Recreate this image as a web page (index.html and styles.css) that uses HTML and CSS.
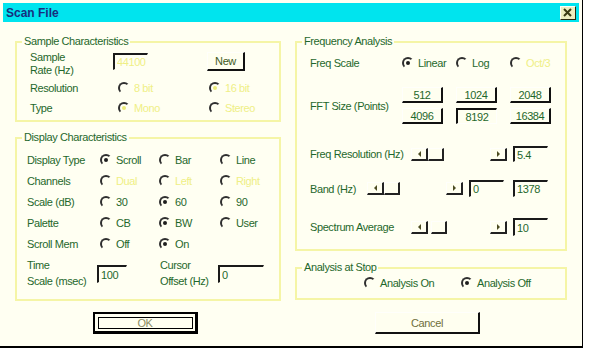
FILE: index.html
```html
<!DOCTYPE html>
<html lang="en">
<head>
    <meta charset="UTF-8">
    <title>Scan File</title>
    <link rel="stylesheet" href="styles.css">
</head>
<body>

    <div class="dialog">
        <!-- Barra del titolo -->
        <div class="titlebar">
            <span class="title">Scan File</span>
            <span class="close">
                <svg width="10" height="9" viewBox="0 0 10 9">
                    <path d="M1 1 L8 8 M8 1 L1 8" stroke="#3b3b12" stroke-width="2"/>
                </svg>
            </span>
        </div>

        <div class="body">
            <div class="col col-left">

                <!-- Sample Characteristics -->
                <fieldset class="group sample">
                    <legend>Sample Characteristics</legend>
                    <div class="sample-grid">
                        <div class="label two-line top">Sample<br>Rate (Hz)</div>
                        <div class="top"><input class="field rate disabled" type="text" value="44100" readonly></div>
                        <div class="top"><button class="btn new">New</button></div>

                        <div class="label">Resolution</div>
                        <div class="opt pad5 disabled"><span class="radio"></span>8 bit</div>
                        <div class="opt pad2 disabled"><span class="radio on pale"></span>16 bit</div>

                        <div class="label">Type</div>
                        <div class="opt pad5 disabled"><span class="radio on pale"></span>Mono</div>
                        <div class="opt pad2 disabled"><span class="radio"></span>Stereo</div>
                    </div>
                </fieldset>

                <!-- Display Characteristics -->
                <fieldset class="group display">
                    <legend>Display Characteristics</legend>
                    <div class="display-grid">
                        <div class="label">Display Type</div>
                        <div class="opt"><span class="radio on"></span>Scroll</div>
                        <div class="opt"><span class="radio"></span>Bar</div>
                        <div class="opt"><span class="radio"></span>Line</div>

                        <div class="label">Channels</div>
                        <div class="opt disabled"><span class="radio"></span>Dual</div>
                        <div class="opt disabled"><span class="radio"></span>Left</div>
                        <div class="opt disabled"><span class="radio"></span>Right</div>

                        <div class="label">Scale (dB)</div>
                        <div class="opt"><span class="radio"></span>30</div>
                        <div class="opt"><span class="radio on"></span>60</div>
                        <div class="opt"><span class="radio"></span>90</div>

                        <div class="label">Palette</div>
                        <div class="opt"><span class="radio"></span>CB</div>
                        <div class="opt"><span class="radio on"></span>BW</div>
                        <div class="opt"><span class="radio"></span>User</div>

                        <div class="label">Scroll Mem</div>
                        <div class="opt"><span class="radio"></span>Off</div>
                        <div class="opt"><span class="radio on"></span>On</div>
                        <div></div>
                    </div>

                    <div class="time-row">
                        <div class="label two-line time-label">Time<br>Scale (msec)</div>
                        <input class="field time" type="text" value="100" readonly>
                        <div class="label two-line cursor-label">Cursor<br>Offset (Hz)</div>
                        <input class="field offset" type="text" value="0" readonly>
                    </div>
                </fieldset>
            </div>

            <div class="col col-right">

                <!-- Frequency Analysis -->
                <fieldset class="group freq">
                    <legend>Frequency Analysis</legend>

                    <div class="scale-row">
                        <div class="label">Freq Scale</div>
                        <div class="opt"><span class="radio on"></span>Linear</div>
                        <div class="opt"><span class="radio"></span>Log</div>
                        <div class="opt disabled"><span class="radio"></span>Oct/3</div>
                    </div>

                    <div class="fft-row">
                        <div class="label fft-label">FFT Size (Points)</div>
                        <div class="fft-grid">
                            <button class="btn">512</button>
                            <button class="btn">1024</button>
                            <button class="btn">2048</button>
                            <button class="btn">4096</button>
                            <button class="btn pressed">8192</button>
                            <button class="btn">16384</button>
                        </div>
                    </div>

                    <div class="slider-row res">
                        <div class="label wide">Freq Resolution (Hz)</div>
                        <div class="scroll">
                            <span class="arrow left"></span>
                            <span class="thumb"></span>
                            <span class="track"></span>
                            <span class="arrow right"></span>
                        </div>
                        <input class="field num" type="text" value="5.4" readonly>
                    </div>

                    <div class="slider-row band">
                        <div class="label narrow">Band (Hz)</div>
                        <div class="scroll">
                            <span class="arrow left"></span>
                            <span class="thumb"></span>
                            <span class="track"></span>
                            <span class="arrow right"></span>
                        </div>
                        <input class="field num" type="text" value="0" readonly>
                        <input class="field num second" type="text" value="1378" readonly>
                    </div>

                    <div class="slider-row avg">
                        <div class="label wide">Spectrum Average</div>
                        <div class="scroll">
                            <span class="arrow left"></span>
                            <span class="thumb apart"></span>
                            <span class="track"></span>
                            <span class="arrow right"></span>
                        </div>
                        <input class="field num" type="text" value="10" readonly>
                    </div>
                </fieldset>

                <!-- Analysis at Stop -->
                <fieldset class="group stop">
                    <legend>Analysis at Stop</legend>
                    <div class="stop-row">
                        <div class="opt"><span class="radio"></span>Analysis On</div>
                        <div class="opt"><span class="radio on"></span>Analysis Off</div>
                    </div>
                </fieldset>
            </div>
        </div>

        <!-- Bottoni finali -->
        <div class="actions">
            <button class="btn big ok">OK</button>
            <button class="btn big cancel">Cancel</button>
        </div>
    </div>

</body>
</html>
```

FILE: styles.css
```css
/* Stile di base della finestra */
body {
    margin: 0;
    background-color: #ffffff;
    font-family: "Liberation Sans", Arial, sans-serif;
    font-size: 11px;
    letter-spacing: -0.4px;
    color: #1f682c;
}

.dialog {
    width: 582px;
    height: 343px;
    padding-top: 3px;
    background-color: #fffff2;
    border-right: 1px solid #000;
    border-bottom: 2px solid #000;
}

/* Barra del titolo */
.titlebar {
    width: 576px;
    height: 19px;
    margin: 0 3px;
    padding: 0 3px;
    box-sizing: border-box;
    background-color: #00e4ee;
    display: flex;
    align-items: center;
    justify-content: space-between;
}
.title {
    font-size: 12px;
    font-weight: bold;
    letter-spacing: 0;
    color: #172f7d;
}
.close {
    width: 16px;
    height: 14px;
    box-sizing: border-box;
    background-color: #eeeebf;
    border: 1px solid;
    border-color: #fffff8 #2b2b10 #2b2b10 #fffff8;
    display: flex;
    align-items: center;
    justify-content: center;
}

/* Colonne */
.body {
    display: flex;
    gap: 14px;
    padding: 13px 0 0 15px;
}
.col {
    display: flex;
    flex-direction: column;
}
.col-left {
    width: 266px;
    gap: 9px;
}
.col-right {
    width: 272px;
    gap: 10px;
}

/* Gruppi */
.group {
    margin: 0;
    padding: 0;
    min-width: 0;
    box-sizing: border-box;
    border: 2px solid #f5f5a6;
}
.group legend {
    margin-left: 5px;
    padding: 0 2px;
    line-height: 13px;
}
.sample { height: 87px; }
.display { height: 170px; }
.freq { height: 216px; }
.stop { height: 39px; }

.label {
    white-space: nowrap;
}
.two-line {
    line-height: 13px;
}
.disabled {
    color: #efef86;
}

/* Radio */
.opt {
    display: flex;
    align-items: center;
    gap: 4px;
    white-space: nowrap;
}
.radio {
    width: 12px;
    height: 12px;
    flex: none;
    box-sizing: border-box;
    border-radius: 50%;
    border: 2px solid;
    border-color: #2f2f2f #fffff2 #fffff2 #2f2f2f;
    display: flex;
    align-items: center;
    justify-content: center;
}
.radio.on::after {
    content: "";
    width: 4px;
    height: 4px;
    border-radius: 50%;
    background-color: #1e1e1e;
}
.radio.pale::after {
    background-color: #ecec7a;
}
.pad5 { padding-left: 5px; }
.pad2 { padding-left: 2px; }

/* Campi di testo */
.field {
    margin: 0;
    padding: 0 0 0 2px;
    box-sizing: border-box;
    font: inherit;
    letter-spacing: inherit;
    color: #1f682c;
    background: transparent;
    border: 1px solid;
    border-width: 2px 1px 1px 2px;
    border-color: #1a1a1a #fffff2 #fffff2 #1a1a1a;
    outline: none;
}
.field.disabled {
    color: #efef86;
}

/* Bottoni */
.btn {
    margin: 0;
    padding: 0;
    box-sizing: border-box;
    font: inherit;
    letter-spacing: inherit;
    color: #1f682c;
    background-color: #fffff0;
    border: 1px solid;
    border-width: 1px 2px 2px 1px;
    border-color: #fffffb #111 #111 #fffffb;
    cursor: pointer;
}
.btn.pressed {
    border-width: 2px 1px 1px 2px;
    border-color: #111 #fffffb #fffffb #111;
}

/* Sample Characteristics */
.sample-grid {
    display: grid;
    grid-template-columns: 83px 94px 1fr;
    grid-template-rows: 26px 18px 18px;
    row-gap: 2px;
    align-items: center;
    padding: 3px 0 0 13px;
}
.sample-grid .top {
    align-self: start;
}
.field.rate {
    width: 35px;
    height: 17px;
    margin-top: 2px;
}
.btn.new {
    width: 38px;
    height: 19px;
    margin-top: 1px;
    color: #3e5a22;
}

/* Display Characteristics */
.display-grid {
    display: grid;
    grid-template-columns: 73px 59px 61px 1fr;
    grid-auto-rows: 21px;
    align-items: center;
    padding: 5px 0 0 10px;
}
.time-row {
    display: flex;
    align-items: flex-start;
    padding: 3px 0 0 10px;
    line-height: 16px;
}
.time-row .two-line {
    line-height: 16px;
}
.time-label {
    width: 70px;
}
.cursor-label {
    width: 58px;
    margin-left: 33px;
}
.field.time {
    width: 30px;
    height: 18px;
    margin-top: 8px;
}
.field.offset {
    width: 46px;
    height: 18px;
    margin-top: 8px;
}

/* Frequency Analysis */
.scale-row {
    display: grid;
    grid-template-columns: 92px 54px 54px 1fr;
    height: 16px;
    align-items: center;
    margin: 7px 0 0 13px;
}
.fft-row {
    display: flex;
    align-items: center;
    margin: 16px 0 0 13px;
}
.fft-label {
    width: 92px;
}
.fft-grid {
    display: grid;
    grid-template-columns: repeat(3, 41px);
    grid-auto-rows: 16px;
    column-gap: 13px;
    row-gap: 5px;
}

.slider-row {
    display: flex;
    align-items: center;
    margin-left: 13px;
}
.slider-row.res {
    margin-top: 22px;
    height: 16px;
}
.slider-row.band {
    margin-top: 18px;
    height: 17px;
}
.slider-row.avg {
    margin-top: 21px;
    height: 18px;
}
.label.wide { width: 101px; }
.label.narrow { width: 57px; }

.scroll {
    width: 96px;
    height: 13px;
    display: flex;
}
.arrow,
.thumb {
    width: 17px;
    height: 13px;
    flex: none;
    box-sizing: border-box;
    background-color: #fffff0;
    border: 1px solid;
    border-width: 1px 2px 2px 1px;
    border-color: #fffffb #222 #222 #fffffb;
    display: flex;
    align-items: center;
    justify-content: center;
}
.thumb {
    width: 16px;
}
.thumb.apart {
    margin-left: 3px;
}
.track {
    flex: 1;
}
.arrow::after {
    content: "";
    border-top: 3px solid transparent;
    border-bottom: 3px solid transparent;
}
.arrow.left::after {
    border-right: 3px solid #4c4c22;
}
.arrow.right::after {
    border-left: 3px solid #4c4c22;
}
.field.num {
    width: 35px;
    height: 100%;
    margin-left: 6px;
}
.field.num.second {
    margin-left: 9px;
}

/* Analysis at Stop */
.stop-row {
    display: grid;
    grid-template-columns: 97px 1fr;
    height: 18px;
    align-items: center;
    padding-left: 67px;
}

/* Bottoni OK e Cancel */
.actions {
    display: flex;
    margin-top: 11px;
}
.btn.big {
    width: 105px;
    height: 22px;
    color: #6f6f3c;
}
.btn.ok {
    margin-left: 93px;
    border: 2px solid #000;
    border-width: 2px 3px 3px 2px;
    outline: 1px solid #000;
    outline-offset: -6px;
    color: #8c8c62;
}
.btn.cancel {
    margin-left: 177px;
}
```
